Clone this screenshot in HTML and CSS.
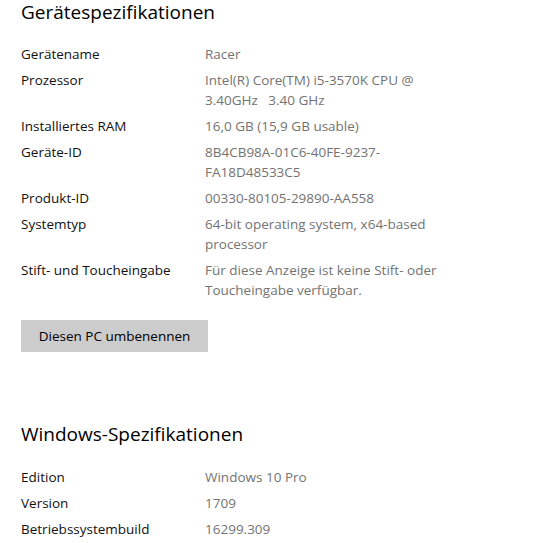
FILE: index.html
```html
<!DOCTYPE html>
<html lang="de">
<head>
<meta charset="utf-8">
<link rel="stylesheet" href="styles.css">
</head>
<body>
<main class="page">
  <section class="section">
    <h2 class="heading">Gerätespezifikationen</h2>
    <dl class="specs">
      <dt>Gerätename</dt><dd>Racer</dd>
      <dt>Prozessor</dt><dd>Intel(R) Core(TM) i5-3570K CPU @<br>3.40GHz&nbsp;&nbsp;&nbsp;3.40 GHz</dd>
      <dt>Installiertes RAM</dt><dd>16,0 GB (15,9 GB usable)</dd>
      <dt>Geräte-ID</dt><dd>8B4CB98A-01C6-40FE-9237-<br>FA18D48533C5</dd>
      <dt>Produkt-ID</dt><dd>00330-80105-29890-AA558</dd>
      <dt>Systemtyp</dt><dd>64-bit operating system, x64-based<br>processor</dd>
      <dt>Stift- und Toucheingabe</dt><dd>Für diese Anzeige ist keine Stift- oder<br>Toucheingabe verfügbar.</dd>
    </dl>
    <button class="btn" type="button">Diesen PC umbenennen</button>
  </section>
  <section class="section section--windows">
    <h2 class="heading">Windows-Spezifikationen</h2>
    <dl class="specs">
      <dt>Edition</dt><dd>Windows 10 Pro</dd>
      <dt>Version</dt><dd>1709</dd>
      <dt>Betriebssystembuild</dt><dd>16299.309</dd>
    </dl>
  </section>
</main>
</body>
</html>
```

FILE: styles.css
```css
html, body {
  margin: 0;
  padding: 0;
  background: #ffffff;
}
body {
  font-family: "Open Sans", "Noto Sans", sans-serif;
  color: #000000;
}
.page {
  padding: 0 0 0 21px;
}
.heading {
  margin: 0;
  font-weight: 400;
  font-size: 19px;
  line-height: 24px;
  color: #000;
}
.specs {
  margin: 20px 0 0 0;
  display: grid;
  grid-template-columns: 184px auto;
  row-gap: 6px;
  font-size: 13.5px;
  line-height: 20px;
}
.specs dt {
  margin: 0;
  color: #111;
}
.specs dd {
  margin: 0;
  color: #737373;
}
.btn {
  margin-top: 20px;
  width: 187px;
  height: 32px;
  border: 0;
  padding: 0;
  background: #cccccc;
  font-family: inherit;
  font-size: 13.5px;
  color: #000;
}
.section--windows {
  margin-top: 70px;
}
.section--windows .specs {
  margin-top: 21px;
}
```
